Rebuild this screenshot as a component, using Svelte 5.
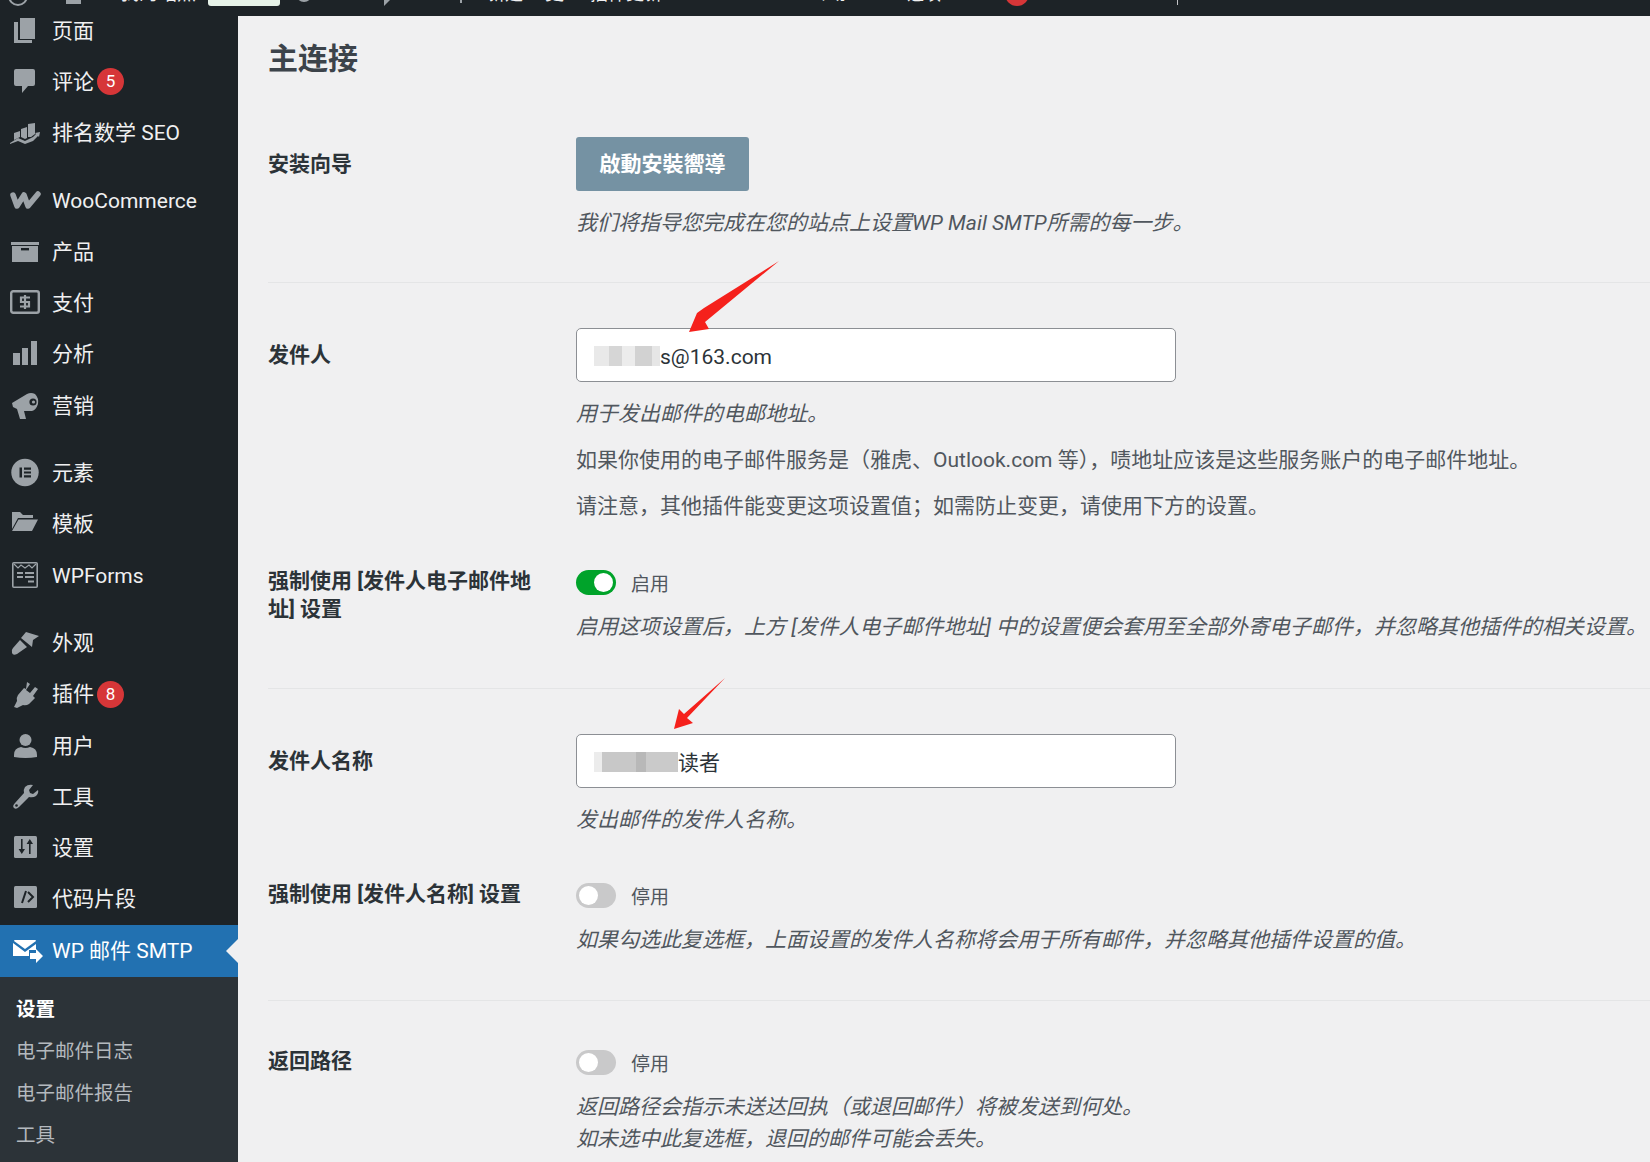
<script>
  const menu = [
    { label: '页面', icon: 'page' },
    { label: '评论', icon: 'comment', badge: 5 },
    { label: '排名数学 SEO', icon: 'rank' },
    { label: 'WooCommerce', icon: 'woo', sep: true },
    { label: '产品', icon: 'box' },
    { label: '支付', icon: 'pay' },
    { label: '分析', icon: 'bars' },
    { label: '营销', icon: 'mega' },
    { label: '元素', icon: 'elem', sep: true },
    { label: '模板', icon: 'folder' },
    { label: 'WPForms', icon: 'forms' },
    { label: '外观', icon: 'brush', sep: true },
    { label: '插件', icon: 'plug', badge: 8 },
    { label: '用户', icon: 'user' },
    { label: '工具', icon: 'wrench' },
    { label: '设置', icon: 'sliders' },
    { label: '代码片段', icon: 'code' }
  ];
  const subs = ['设置', '电子邮件日志', '电子邮件报告', '工具'];
</script>

<div class="page">
  <div class="adminbar">
    <span class="bar-logo"></span>
    <span class="bar-home"></span>
    <span class="bar-text t1">我的站点</span>
    <span class="bar-pill"></span>
    <span class="bar-arc"></span>
    <span class="bar-wedge"></span>
    <span class="bar-tick short"></span>
    <span class="bar-text t2">新建</span>
    <span class="bar-text t3">更</span>
    <span class="bar-text t4">插件更新</span>
    <span class="bar-text t5">帮助</span>
    <span class="bar-text t6">选项</span>
    <span class="bar-dot"></span>
    <span class="bar-tick"></span>
    <span class="bar-text t7">你好</span>
  </div>
  <div class="body">
    <nav class="side">
      <ul class="menu">
        {#each menu as m}
          <li class="item" class:sep={m.sep}>
            <svg class="ic" viewBox="0 0 32 32" fill="#9ca2a7">
              {#if m.icon === 'page'}
                <path d="M11 3h15v21H11zM5 7h4v18h14v3H5z" />
              {:else if m.icon === 'comment'}
                <path d="M7 3h17a2 2 0 0 1 2 2v13a2 2 0 0 1-2 2h-5l-6 7v-7H7a2 2 0 0 1-2-2V5a2 2 0 0 1 2-2z" />
              {:else if m.icon === 'rank'}
                <path d="M5 16l6-2v6l-6 3zM12 12l6-2v11l-2 1-4-2zM19 7l7-1v11l-4 3-3 0z" />
                <path d="M1 26l8-5 7 3 8-4 3-3-1-1 5-1-1 5-1-1-5 5-8 3-7-3-8 3z" />
              {:else if m.icon === 'woo'}
                <path d="M4 10l4 11 7-11 4 11 10-12" fill="none" stroke="#9ca2a7" stroke-width="5.500" stroke-linecap="round" stroke-linejoin="round" />
              {:else if m.icon === 'box'}
                <path d="M2 6h28v3H2zM3 10h26v16H3z" /><rect x="12" y="12" width="8" height="2.4" fill="#1d2327" />
              {:else if m.icon === 'pay'}
                <rect x="2.2" y="4.2" width="27.6" height="21.6" rx="2" fill="none" stroke="#9ca2a7" stroke-width="2.4" />
                <path d="M21 10.5h-9v4.5h8v4.5h-9M16 8v14" fill="none" stroke="#9ca2a7" stroke-width="2.2" />
              {:else if m.icon === 'bars'}
                <path d="M4 15h7v12H4zM13 10h6v17h-6zM22 3h6v24h-6z" />
              {:else if m.icon === 'mega'}
                <path d="M3 13L18 4q4-2 8 0 4 4 3 10-2 6-6 7h-8l2 8h-6L8 19l-4-2z" /><circle cx="24" cy="12" r="3.6" fill="#1d2327" /><circle cx="24.5" cy="12" r="1.6" />
              {:else if m.icon === 'elem'}
                <circle cx="16" cy="15.5" r="13.7" /><path d="M10.5 10.5H13v10h-2.500zM15 10.500h7v2.200h-7zM15 14.400h7v2.200h-7zM15 18.300h7v2.200h-7z" fill="#1d2327" />
              {:else if m.icon === 'folder'}
                <path d="M3 4h8l3 3h10v3H9l-6 11zM9.500 11.500H29L23 23H3z" />
              {:else if m.icon === 'forms'}
                <rect x="3.800" y="2.800" width="24.400" height="24.400" rx="1" fill="none" stroke="#9ca2a7" stroke-width="1.6" />
                <path d="M5 4l4 4 3-3 4 3 4-3 3 3 4-4" fill="none" stroke="#9ca2a7" stroke-width="1.2" />
                <path d="M8 12h6v2H8zM16 12h9v2h-9zM8 16h6v2H8zM16 16h9v2h-9zM19 20.500h6v2h-6z" />
              {:else if m.icon === 'brush'}
                <path d="M17 5l13 4-6 4-1 7-11-9zM11 13l7 7-10 7q-4 2-5-1t1-5z" />
              {:else if m.icon === 'plug'}
                <path d="M18 4l3 2-4 6 4 3 5-6 3 2-5 7 2 2-6 6q-3 2-6 1l-6 3-3-1 3-6q-1-3 1-6l6-7 2 1z" />
              {:else if m.icon === 'user'}
                <circle cx="16.500" cy="10" r="6" /><path d="M5 25q0-7 7-8 4.500 2 9 0 7 1 7 8v2q-11.500 2-23 0z" />
              {:else if m.icon === 'wrench'}
                <path d="M29 9l-5 4-3-1-1-3 4-5q-5-1-8 2-2 3-1 6L6 22q-3 3-1 5t5-1l10-10q4 1 7-1 3-3 2-6z" /><circle cx="7.500" cy="24.500" r="1.300" fill="#1d2327" />
              {:else if m.icon === 'sliders'}
                <rect x="5" y="4" width="23" height="22" rx="1.500" />
                <path d="M12 7h1.600v10H16l-3.200 5-3.200-5h2.400zM20 22h1.600V12H24l-3.200-5-3.200 5H20z" fill="#1d2327" />
              {:else if m.icon === 'code'}
                <rect x="5" y="3" width="23" height="22" rx="1.500" />
                <path d="M13 20l4-12M19 9l5 5-5 5" fill="none" stroke="#1d2327" stroke-width="2" />
              {/if}
            </svg>
            <span class="label">{m.label}</span>
            {#if m.badge}<span class="badge">{m.badge}</span>{/if}
          </li>
        {/each}
        <li class="item current">
          <svg class="ic mail" viewBox="0 0 32 32" fill="#fff">
            <path d="M6 5h20a1 1 0 0 1 1 1L16 14 5 6a1 1 0 0 1 1-1zM4 8l12 9 11-8v6h-7v6H4z" />
            <path d="M21 18h6v-4l7 7-7 7v-4h-6z" />
          </svg>
          <span class="label">WP 邮件 SMTP</span>
        </li>
      </ul>
      <ul class="sub">
        {#each subs as s, i}
          <li class:on={i === 0}>{s}</li>
        {/each}
      </ul>
    </nav>

    <main class="main">
      <h2>主连接</h2>

      <section class="group g-wizard">
        <div class="row">
          <div class="name mid">安装向导</div>
          <div class="field">
            <div class="wizard">啟動安裝嚮導</div>
            <p class="desc">我们将指导您完成在您的站点上设置WP Mail SMTP所需的每一步。</p>
          </div>
        </div>
      </section>

      <section class="group g-from">
        <div class="row">
          <div class="name mid">发件人</div>
          <div class="field">
            <div class="input"><span class="blur b1"></span><span class="val">s@163.com</span></div>
            <p class="desc">用于发出邮件的电邮地址。</p>
            <p class="desc plain">如果你使用的电子邮件服务是（雅虎、Outlook.com 等），啧地址应该是这些服务账户的电子邮件地址。</p>
            <p class="desc plain">请注意，其他插件能变更这项设置值；如需防止变更，请使用下方的设置。</p>
          </div>
        </div>
        <div class="row force">
          <div class="name">强制使用 [发件人电子邮件地址] 设置</div>
          <div class="field">
            <div class="switch"><span class="track on"></span><span class="state">启用</span></div>
            <p class="desc tight">启用这项设置后，上方 [发件人电子邮件地址] 中的设置便会套用至全部外寄电子邮件，并忽略其他插件的相关设置。</p>
          </div>
        </div>
      </section>

      <section class="group g-from g-name">
        <div class="row">
          <div class="name mid">发件人名称</div>
          <div class="field">
            <div class="input"><span class="blur b2"></span><span>读者</span></div>
            <p class="desc">发出邮件的发件人名称。</p>
          </div>
        </div>
        <div class="row force">
          <div class="name">强制使用 [发件人名称] 设置</div>
          <div class="field">
            <div class="switch"><span class="track"></span><span class="state">停用</span></div>
            <p class="desc tight">如果勾选此复选框，上面设置的发件人名称将会用于所有邮件，并忽略其他插件设置的值。</p>
          </div>
        </div>
      </section>

      <section class="group g-return">
        <div class="row">
          <div class="name">返回路径</div>
          <div class="field">
            <div class="switch"><span class="track"></span><span class="state">停用</span></div>
            <p class="desc tight">返回路径会指示未送达回执（或退回邮件）将被发送到何处。<br />如未选中此复选框，退回的邮件可能会丢失。</p>
          </div>
        </div>
      </section>

      <svg class="arrow a1" viewBox="0 0 90 71"><path d="M90 0L15 47l-7 5L0 71l20-3-4-7z" fill="#f5211c" /></svg>
      <svg class="arrow a2" viewBox="0 0 51 51"><path d="M51 0L10 36l-5-5L0 51l19-6-6-5z" fill="#f5211c" /></svg>
    </main>
  </div>
</div>

<style>
  :global(body) { margin: 0; background: #f0f0f1; }
  .page {
    width: 1650px;
    height: 1162px;
    overflow: hidden;
    font-family: Roboto, "Noto Sans CJK SC", sans-serif;
    font-size: 21px;
    color: #3c434a;
  }
  .adminbar {
    height: 16px;
    background: #1d2327;
    position: relative;
    overflow: hidden;
    color: #f0f0f1;
  }
  .bar-text { position: absolute; top: -20px; font-size: 19px; line-height: 28px; white-space: nowrap; }
  .t1 { left: 120px; }
  .t2 { left: 487px; font-size: 18px; }
  .t3 { left: 545px; }
  .t4 { left: 590px; font-size: 18px; }
  .t5 { left: 816px; font-size: 15px; }
  .t6 { left: 907px; font-size: 17px; }
  .t7 { left: 1283px; font-size: 11px; }
  .bar-logo { position: absolute; left: 8px; top: -14px; width: 16px; height: 16px; border: 2px solid #9ca2a7; border-radius: 50%; }
  .bar-home { position: absolute; left: 66px; top: 0; width: 15px; height: 4px; background: #9ca2a7; }
  .bar-pill { position: absolute; left: 208px; top: 0; width: 72px; height: 6px; background: #e6f2e8; border-radius: 0 0 3px 3px; }
  .bar-arc { position: absolute; left: 296px; top: -14px; width: 16px; height: 16px; border-radius: 50%; background: #9ca2a7; }
  .bar-wedge { position: absolute; left: 384px; top: 0; width: 0; height: 0; border-top: 6px solid #9ca2a7; border-right: 6px solid transparent; }
  .bar-dot { position: absolute; left: 1005px; top: -18px; width: 24px; height: 24px; border-radius: 50%; background: #d63638; }
  .bar-tick { position: absolute; left: 1177px; top: 0; width: 1px; height: 5px; background: #c3c4c7; }
  .bar-tick.short { left: 460px; width: 2px; height: 3px; background: #9ca2a7; }

  .body { display: flex; height: 1146px; }
  .side { width: 238px; flex: none; background: #1d2327; overflow: hidden; color: #f0f0f1; }
  ul { list-style: none; margin: 0; padding: 0; }
  .menu { margin-top: -11px; }
  .item { height: 51.3px; display: flex; align-items: center; position: relative; white-space: nowrap; }
  .item.sep { margin-top: 16px; }
  .ic { width: 32px; height: 32px; margin-left: 9px; flex: none; margin-right: 11px; overflow: visible; }
  .label { line-height: 28px; }
  .badge {
    width: 27px;
    height: 27px;
    border-radius: 50%;
    background: #d63638;
    color: #fff;
    font-size: 17px;
    line-height: 27px;
    text-align: center;
    margin-left: 3px;
  }
  .current { background: #2271b1; color: #fff; height: 52px; }
  .current::after {
    content: "";
    position: absolute;
    right: 0;
    top: 50%;
    margin-top: -12px;
    border: 12px solid transparent;
    border-right-color: #f0f0f1;
    border-left-width: 0;
  }
  .sub { background: #2c3338; padding: 12px 0 0 16px; height: 180px; font-size: 19.5px; color: #b4b9be; }
  .sub li { height: 42px; line-height: 42px; }
  .sub li.on { color: #fff; font-weight: 700; }

  .main { flex: 1; padding-left: 30px; position: relative; min-width: 0; }
  h2 { font-size: 30px; line-height: 40px; font-weight: 700; color: #3c434a; margin: 23px 0 0; }
  .group { border-bottom: 1px solid #e4e5e6; }
  .g-wizard { margin-top: 58px; padding-bottom: 43px; }
  .g-from { padding: 45px 0 45px; }
  .g-from.g-name { padding-bottom: 44px; }
  .g-return { border-bottom: 0; padding-top: 42px; }
  .row { display: flex; }
  .row.force { margin-top: 41px; }
  .g-name .row.force { margin-top: 40px; }
  .name { width: 308px; flex: none; font-weight: 700; font-size: 21px; line-height: 28px; color: #2c3338; padding: 4px 30px 0 0; box-sizing: border-box; }
  .name.mid { padding-top: 13px; }
  .field { min-width: 0; white-space: nowrap; }
  .wizard { width: 173px; height: 54px; background: #7592a3; border-radius: 3px; color: #fff; font-weight: 700; font-size: 21px; line-height: 54px; text-align: center; }
  .desc { margin: 16px 0 0; font-style: italic; font-size: 21px; line-height: 32px; color: #50575e; }
  .desc.plain { font-style: normal; margin-top: 14px; }
  .desc.tight { margin-top: 10px; }
  .input { width: 600px; height: 54px; box-sizing: border-box; background: #fff; border: 1px solid #8c8f94; border-radius: 5px; display: flex; align-items: center; padding-left: 17px; color: #2c3338; font-size: 21px; }
  .val { padding-top: 3px; }
  .blur { display: block; height: 20px; margin-top: 2px; }
  .b1 { width: 66px; background: linear-gradient(90deg, #e9e9e9 0 22%, #d6d6d6 22% 42%, #ececec 42% 62%, #d2d2d2 62% 88%, #e6e6e6 88%); }
  .b2 { width: 84px; background: linear-gradient(90deg, #ececec 0 10%, #c8c8c8 10% 50%, #b8b8b8 50% 62%, #cacaca 62%); }
  .switch { display: flex; align-items: center; gap: 15px; height: 38px; font-size: 19px; color: #50575e; }
  .track { width: 40px; height: 25px; border-radius: 13px; background: #c9c9ca; position: relative; }
  .track::after { content: ""; position: absolute; left: 3px; top: 3px; width: 19px; height: 19px; border-radius: 50%; background: #fff; }
  .track.on { background: #00a32a; }
  .track.on::after { left: 18px; }
  .arrow { position: absolute; }
  .a1 { left: 451px; top: 245px; width: 90px; height: 71px; }
  .a2 { left: 436px; top: 662px; width: 51px; height: 51px; }
</style>
